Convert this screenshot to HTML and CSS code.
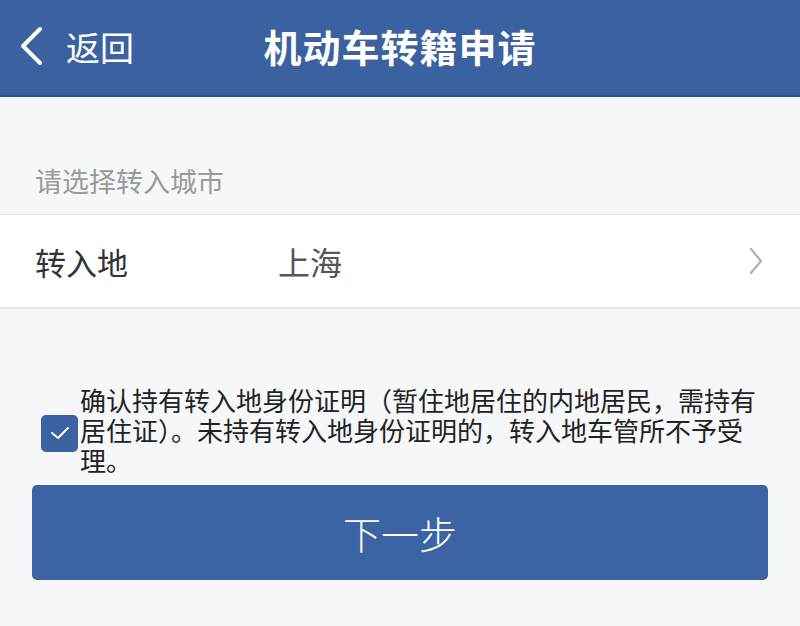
FILE: index.html
```html
<!DOCTYPE html>
<html>
<head>
  <meta charset="utf-8">
  <link rel="stylesheet" href="styles.css">
</head>
<body>
<div class="header">
  <div class="back">
    <svg class="back-icon" width="26" height="40" viewBox="0 0 26 40">
      <path d="M22 3 L5 20 L22 37" fill="none" stroke="#fff" stroke-width="4" stroke-linecap="round" stroke-linejoin="round"/>
    </svg>
    <span class="back-text">返回</span>
  </div>
  <div class="title">机动车转籍申请</div>
  <div></div>
</div>

<div class="section-label">请选择转入城市</div>

<div class="row">
  <span class="row-name">转入地</span>
  <span class="row-value">上海</span>
  <svg class="row-arrow" width="16" height="28" viewBox="0 0 16 28">
    <path d="M3 2 L13 14 L3 26" fill="none" stroke="#b0b0b0" stroke-width="2.2" stroke-linecap="round" stroke-linejoin="round"/>
  </svg>
</div>

<div class="agree">
  <div class="checkbox">
    <svg width="22" height="16" viewBox="0 0 22 16">
      <path d="M3 8 L9 13 L19 3" fill="none" stroke="#fff" stroke-width="2" stroke-linecap="round" stroke-linejoin="round"/>
    </svg>
  </div>
  <p class="agree-text">确认持有转入地身份证明（暂住地居住的内地居民，需持有居住证）。未持有转入地身份证明的，转入地车管所不予受理。</p>
</div>

<button class="next-btn">下一步</button>
</body>
</html>
```

FILE: styles.css
```css
/* reset */
* {
  margin: 0;
  padding: 0;
  box-sizing: border-box;
}

body {
  width: 800px;
  height: 626px;
  overflow: hidden;
  background-color: #f6f7f9;
  font-family: "Noto Sans CJK SC", "Noto Sans", sans-serif;
  color: #222;
}

/* top bar */
.header {
  height: 97px;
  padding-bottom: 5px;
  background-color: #3b61a0;
  border-bottom: 2px solid #2d5088;
  display: grid;
  grid-template-columns: 1fr auto 1fr;
  align-items: center;
  color: #fff;
}

.back {
  display: flex;
  align-items: center;
  padding-left: 18px;
  padding-top: 2px;
}

.back-text {
  font-size: 34px;
  margin-left: 22px;
}

.title {
  font-size: 38px;
  font-weight: bold;
  letter-spacing: 1px;
}

/* city select */
.section-label {
  margin-top: 67px;
  padding-left: 35px;
  font-size: 27px;
  line-height: 34px;
  color: #9a9a9a;
}

.row {
  margin-top: 16px;
  height: 95px;
  background-color: #fff;
  border-top: 1px solid #e6e6e6;
  border-bottom: 2px solid #e6e6e6;
  display: flex;
  align-items: center;
  padding: 0 36px 0 35px;
}

.row-name {
  width: 243px;
  font-size: 31px;
  color: #333;
}

.row-value {
  flex: 1;
  font-size: 32px;
  color: #555;
}

/* agreement */
.agree {
  margin-top: 76px;
  display: flex;
  align-items: center;
  padding-left: 41px;
}

.checkbox {
  width: 37px;
  height: 37px;
  margin-top: 6px;
  border-radius: 5px;
  background-color: #3b61a0;
  display: flex;
  align-items: center;
  justify-content: center;
  flex-shrink: 0;
}

.agree-text {
  width: 690px;
  margin-left: 2px;
  font-size: 26px;
  line-height: 30px;
  color: #222;
}

/* main button */
.next-btn {
  display: block;
  margin: 10px 0 0 32px;
  width: 736px;
  height: 95px;
  border: none;
  border-radius: 5px;
  background-color: #3c63a3;
  color: #fff;
  font-family: "Noto Sans CJK SC", "Noto Sans", sans-serif;
  font-size: 38px;
  font-weight: 300;
}
```
